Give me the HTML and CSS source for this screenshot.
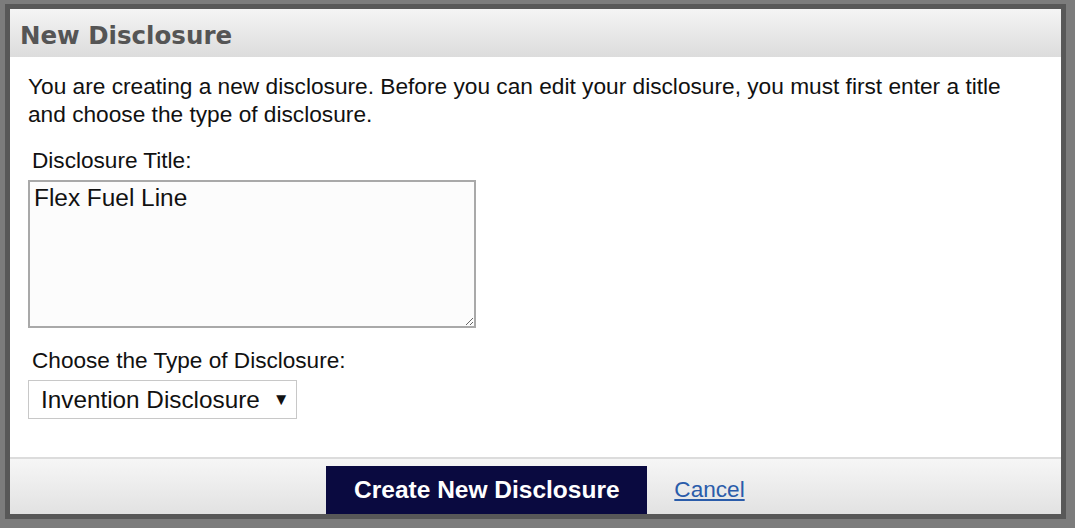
FILE: index.html
```html
<!DOCTYPE html>
<html lang="en">
<head>
    <meta charset="UTF-8">
    <title>New Disclosure</title>
    <link rel="stylesheet" href="styles.css">
</head>
<body>

    <div class="dialog">
        <!-- Header -->
        <div class="dialog-header">
            <h1>New Disclosure</h1>
        </div>

        <!-- Form body -->
        <div class="dialog-body">
            <p class="intro">You are creating a new disclosure. Before you can edit your disclosure, you must first enter a title and choose the type of disclosure.</p>

            <label for="title">Disclosure Title:</label>
            <textarea id="title" name="title">Flex Fuel Line</textarea>

            <label for="type" class="type-label">Choose the Type of Disclosure:</label>
            <div class="select-box">
                <span id="type">Invention Disclosure</span>
                <span class="arrow">&#9660;</span>
            </div>
        </div>

        <!-- Buttons -->
        <div class="dialog-footer">
            <button type="button" class="btn-create">Create New Disclosure</button>
            <a href="#" class="cancel">Cancel</a>
        </div>
    </div>

</body>
</html>
```

FILE: styles.css
```css
html, body {
    margin: 0;
    height: 100%;
}
body {
    background-color: #7c7c7c;
    font-family: "Liberation Sans", Arial, sans-serif;
    padding: 4px 9px 9px 5px;
    box-sizing: border-box;
}
.dialog {
    border: 5px solid #585858;
    background-color: #fff;
    height: 100%;
    box-sizing: border-box;
    display: flex;
    flex-direction: column;
}
.dialog-header {
    height: 48px;
    background: linear-gradient(#f4f4f4, #dcdcdc);
    display: flex;
    align-items: center;
    padding: 4px 0 0 10px;
    box-sizing: border-box;
}
.dialog-header h1 {
    margin: 0;
    font-family: "DejaVu Sans", Verdana, sans-serif;
    font-size: 24.5px;
    font-weight: bold;
    color: #555;
}
.dialog-body {
    flex: 1;
    padding: 15px 18px 0 18px;
}
.intro {
    margin: 0 0 20px 0;
    font-size: 22.7px;
    line-height: 28px;
    color: #111;
}
label {
    display: block;
    font-size: 22.6px;
    color: #111;
    margin-left: 4px;
    margin-bottom: 6px;
}
textarea {
    display: block;
    width: 448px;
    height: 148px;
    box-sizing: border-box;
    border: 2px solid #a9a9a9;
    background-color: #fcfcfc;
    font-family: "Liberation Sans", Arial, sans-serif;
    font-size: 24.4px;
    padding: 2px 4px;
    color: #111;
    resize: both;
}
.type-label {
    margin-top: 20px;
}
.select-box {
    width: 269px;
    height: 39px;
    box-sizing: border-box;
    border: 1px solid #c8c8c8;
    display: flex;
    align-items: center;
    padding-left: 12px;
    font-size: 24.3px;
    color: #111;
}
.arrow {
    font-size: 17px;
    margin-left: 13px;
}
.dialog-footer {
    height: 57px;
    border-top: 2px solid #dcdcdc;
    background: linear-gradient(#f6f6f6, #e2e2e2);
    box-sizing: border-box;
    display: flex;
    justify-content: center;
    align-items: flex-end;
    gap: 27px;
}
.btn-create {
    width: 321px;
    height: 48px;
    background-color: #0a0a40;
    color: #fff;
    border: none;
    font-family: "Liberation Sans", Arial, sans-serif;
    font-size: 24.5px;
    font-weight: bold;
    cursor: pointer;
}
.cancel {
    color: #2a5caa;
    font-size: 22.6px;
    margin-bottom: 11px;
}
```
